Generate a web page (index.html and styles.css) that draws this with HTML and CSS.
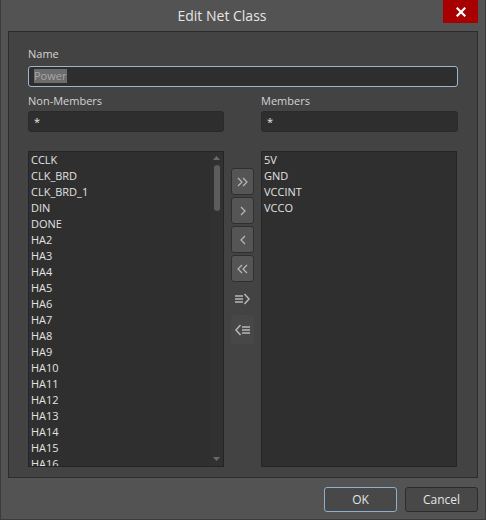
FILE: index.html
```html
<!DOCTYPE html>
<html>
<head>
<meta charset="utf-8">
<title>Edit Net Class</title>
<link rel="stylesheet" href="styles.css">
</head>
<body>
<div class="window">
  <div class="titlebar">
    <div class="title">Edit Net Class</div>
    <div class="close">
      <svg width="10" height="10" viewBox="0 0 10 10"><path d="M1.5 1.5 L8.5 8.5 M8.5 1.5 L1.5 8.5" stroke="#fff" stroke-width="2.2" stroke-linecap="square"/></svg>
    </div>
  </div>
  <div class="panel">
    <div class="label">Name</div>
    <div class="name-input"><span class="sel">Power</span></div>
    <div class="grid">
      <div class="label">Non-Members</div>
      <div></div>
      <div class="label">Members</div>
      <div class="filter">*</div>
      <div></div>
      <div class="filter">*</div>
      <div class="list">
        <div class="items">
          <div class="item">CCLK</div>
          <div class="item">CLK_BRD</div>
          <div class="item">CLK_BRD_1</div>
          <div class="item">DIN</div>
          <div class="item">DONE</div>
          <div class="item">HA2</div>
          <div class="item">HA3</div>
          <div class="item">HA4</div>
          <div class="item">HA5</div>
          <div class="item">HA6</div>
          <div class="item">HA7</div>
          <div class="item">HA8</div>
          <div class="item">HA9</div>
          <div class="item">HA10</div>
          <div class="item">HA11</div>
          <div class="item">HA12</div>
          <div class="item">HA13</div>
          <div class="item">HA14</div>
          <div class="item">HA15</div>
          <div class="item">HA16</div>
        </div>
        <div class="scrollbar">
          <svg class="arrow" width="7" height="4" viewBox="0 0 7 4"><path d="M0 4 L3.5 0 L7 4 Z" fill="#6a6a6a"/></svg>
          <div class="thumb"></div>
          <div class="track"></div>
          <svg class="arrow" width="7" height="4" viewBox="0 0 7 4"><path d="M0 0 L3.5 4 L7 0 Z" fill="#6a6a6a"/></svg>
        </div>
      </div>
      <div class="mid">
        <div class="btn">
          <svg width="11" height="10" viewBox="0 0 11 10"><path d="M1 1 L5 5 L1 9 M6 1 L10 5 L6 9" fill="none" stroke="#b8b8b8" stroke-width="1.2"/></svg>
        </div>
        <div class="btn">
          <svg width="6" height="10" viewBox="0 0 6 10"><path d="M1 1 L5 5 L1 9" fill="none" stroke="#b8b8b8" stroke-width="1.2"/></svg>
        </div>
        <div class="btn">
          <svg width="6" height="10" viewBox="0 0 6 10"><path d="M5 1 L1 5 L5 9" fill="none" stroke="#b8b8b8" stroke-width="1.2"/></svg>
        </div>
        <div class="btn">
          <svg width="11" height="10" viewBox="0 0 11 10"><path d="M5 1 L1 5 L5 9 M10 1 L6 5 L10 9" fill="none" stroke="#b8b8b8" stroke-width="1.2"/></svg>
        </div>
        <div class="icon-btn">
          <svg width="15" height="12" viewBox="0 0 15 12"><path d="M0 3 H8 M0 6 H8 M0 9 H8" stroke="#b8b8b8" stroke-width="1.3"/><path d="M9.5 1 L14 6 L9.5 11" fill="none" stroke="#b8b8b8" stroke-width="1.5"/></svg>
        </div>
        <div class="icon-btn dim">
          <svg width="15" height="12" viewBox="0 0 15 12"><path d="M7 3 H15 M7 6 H15 M7 9 H15" stroke="#b8b8b8" stroke-width="1.3"/><path d="M5.5 1 L1 6 L5.5 11" fill="none" stroke="#b8b8b8" stroke-width="1.5"/></svg>
        </div>
      </div>
      <div class="list">
        <div class="items">
          <div class="item">5V</div>
          <div class="item">GND</div>
          <div class="item">VCCINT</div>
          <div class="item">VCCO</div>
        </div>
      </div>
    </div>
  </div>
  <div class="footer">
    <div class="button default">OK</div>
    <div class="button">Cancel</div>
  </div>
</div>
</body>
</html>
```
FILE: styles.css
```css
html, body {
  margin: 0;
  padding: 0;
  background: #535353;
}
body {
  font-family: "Open Sans", "Noto Sans", sans-serif;
  color: #dcdcdc;
}
.window {
  width: 486px;
  height: 520px;
  box-sizing: border-box;
  border: 1px solid #3c3c3c;
  border-top: none;
  background: #535353;
  display: flex;
  flex-direction: column;
}
.titlebar {
  height: 31px;
  display: flex;
  align-items: flex-start;
  flex-shrink: 0;
}
.title {
  flex: 1;
  text-align: center;
  font-size: 14px;
  line-height: 31px;
  color: #e6e6e6;
}
.close {
  width: 35px;
  height: 23px;
  margin-right: 7px;
  background: #a80000;
  display: flex;
  align-items: center;
  justify-content: center;
}
.close svg { display: block; }
.panel {
  margin: 0 7px;
  height: 447px;
  flex-shrink: 0;
  box-sizing: border-box;
  border: 1px solid #2c2c2c;
  background: #434343;
  padding: 14px 19px 0 19px;
  font-size: 11px;
}
.label {
  font-size: 11px;
  line-height: 16px;
  color: #d4d4d4;
}
.name-input {
  margin-top: 4px;
  height: 21px;
  box-sizing: border-box;
  border: 1px solid #9cb6d2;
  border-radius: 3px;
  background: #2e2e2e;
  padding: 1px 0 0 5px;
  line-height: 15px;
}
.sel {
  display: inline-block;
  background: #6c6c6c;
  color: #a6a6a6;
  padding: 0 1px 0 0;
  line-height: 14px;
}
.grid {
  margin-top: 6px;
  display: grid;
  grid-template-columns: 196px 37px 197px;
  grid-template-rows: 16px auto auto;
}
.filter {
  margin-top: 2px;
  height: 21px;
  box-sizing: border-box;
  border: 1px solid #2a2a2a;
  border-radius: 3px;
  background: #2e2e2e;
  padding: 1px 0 0 5px;
  line-height: 18px;
  color: #e8e8e8;
}
.grid > .filter:last-of-type { margin-right: 1px; }
.list {
  margin-top: 19px;
  height: 316px;
  box-sizing: border-box;
  border: 1px solid #252525;
  background: #2f2f2f;
  display: flex;
  overflow: hidden;
}
.grid > .list:last-child { margin-right: 1px; }
.items {
  flex: 1;
  padding: 0 0 0 2px;
  overflow: hidden;
}
.item {
  line-height: 16px;
  height: 16px;
  font-size: 11px;
  color: #e2e2e2;
  white-space: nowrap;
}
.scrollbar {
  width: 13px;
  display: flex;
  flex-direction: column;
  align-items: center;
  padding: 4px 0 5px;
  background: #313131;
}
.arrow { display: block; flex-shrink: 0; }
.thumb {
  margin-top: 5px;
  width: 6px;
  height: 46px;
  border-radius: 3px;
  background: #5c5c5c;
}
.track { flex: 1; }
.mid {
  display: flex;
  flex-direction: column;
  align-items: center;
  padding-top: 36px;
  gap: 2px;
}
.btn {
  width: 23px;
  height: 27px;
  box-sizing: border-box;
  border: 1px solid #2f2f2f;
  border-radius: 3px;
  background: #555555;
  display: flex;
  align-items: center;
  justify-content: center;
}
.btn svg, .icon-btn svg { display: block; }
.icon-btn {
  width: 23px;
  height: 28px;
  box-sizing: border-box;
  border-radius: 3px;
  display: flex;
  align-items: center;
  justify-content: center;
  margin-top: 1px;
}
.icon-btn.dim {
  margin-top: 0;
  background: #474747;
  height: 29px;
}
.footer {
  flex: 1;
  display: flex;
  justify-content: flex-end;
  align-items: flex-start;
  gap: 8px;
  padding: 9px 7px 0 0;
}
.button {
  width: 73px;
  height: 25px;
  box-sizing: border-box;
  border: 1px solid #2c2c2c;
  border-radius: 3px;
  background: #484848;
  color: #e4e4e4;
  font-size: 12px;
  line-height: 23px;
  text-align: center;
}
.button.default {
  border-color: #8fadcc;
}
```
